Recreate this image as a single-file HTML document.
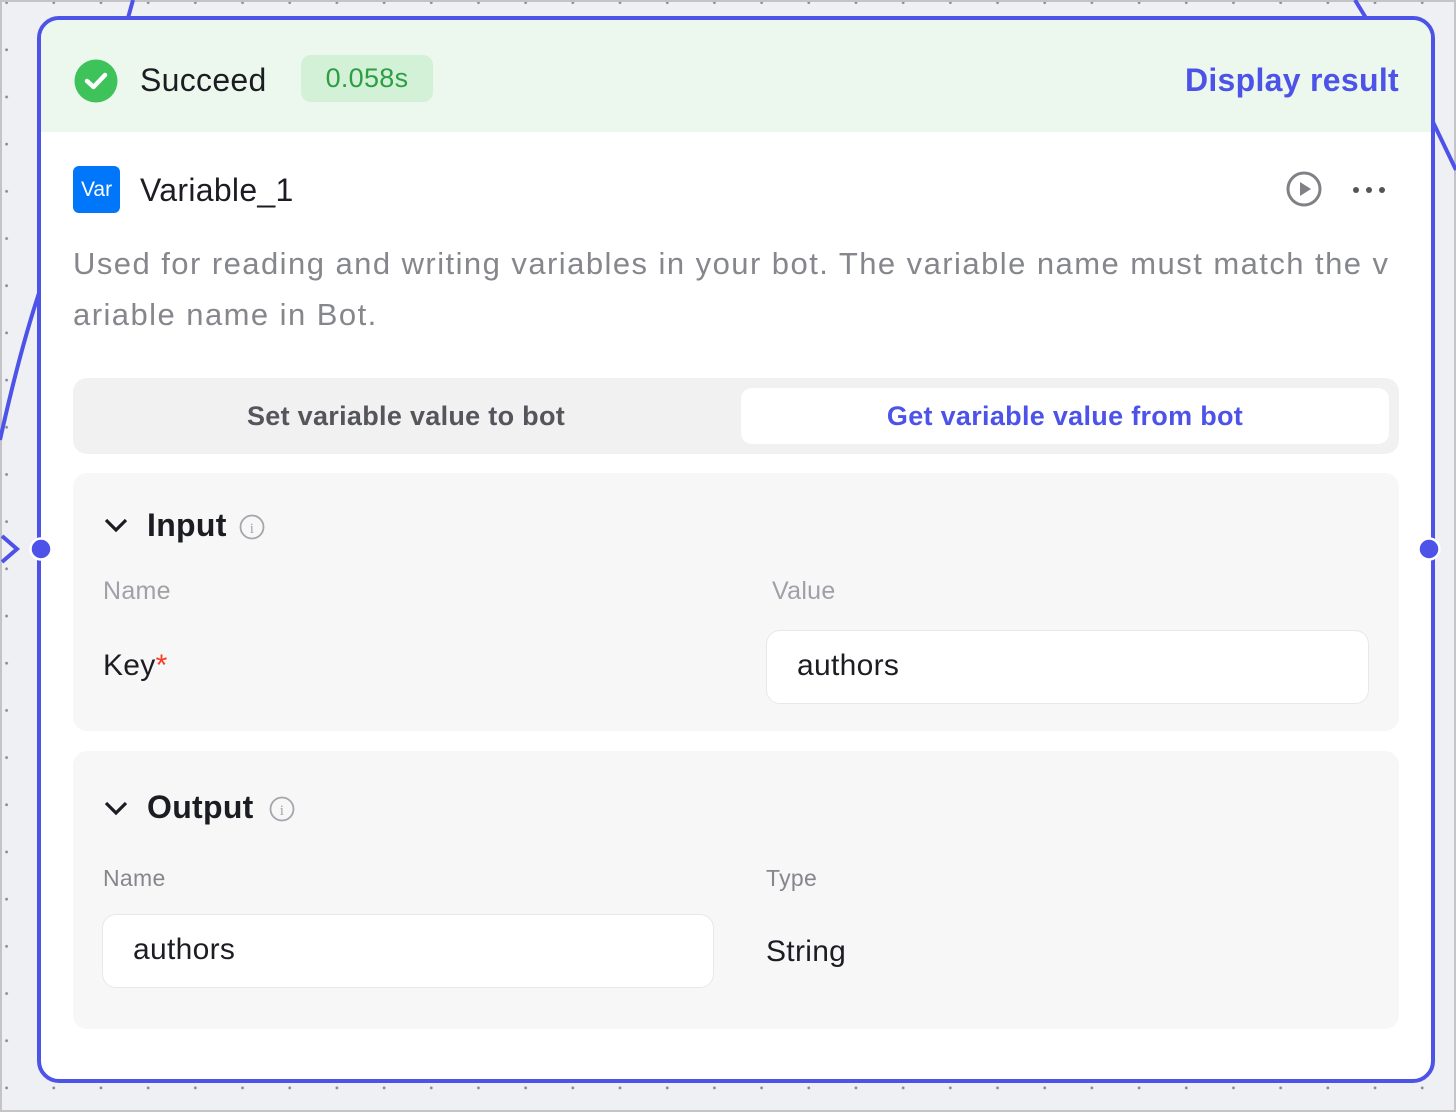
<!DOCTYPE html>
<html><head><style>
*{box-sizing:border-box;margin:0;padding:0}
body{width:1456px;height:1112px;overflow:hidden;font-family:"Liberation Sans",sans-serif;background-color:#eff0f3;background-image:radial-gradient(circle,#8a8a8f 1.3px,transparent 1.6px);background-size:47.2px 47.2px;background-position:-17px -21px;position:relative;border:2px solid #c4c4c8;letter-spacing:0.3px}
.card{position:absolute;left:35px;top:14px;width:1398px;height:1067px;border:4px solid #4d53e8;border-radius:22px;background:#fff;overflow:hidden}
.hdr{height:112px;background:#ecf7ee;position:relative}
.abs{position:absolute}
.sec{position:absolute;left:32px;width:1326px;background:#f7f7f8;border-radius:14px}
.lbl{position:absolute;font-size:25px;color:#a0a1a6}
.inp{position:absolute;background:#fff;border:1.5px solid #e8e8ec;border-radius:14px;height:74px;font-size:30px;color:#1c1d23;padding:18px 30px}
</style></head><body>
<svg class="abs" style="left:-2px;top:-2px" width="1456" height="1112">
<path d="M133 0 L128 18" stroke="#4d53e8" stroke-width="4"/>
<path d="M1355 0 L1366 18" stroke="#4d53e8" stroke-width="4"/>
<path d="M1432 120 L1456 170" stroke="#4d53e8" stroke-width="4"/>
<path d="M40 290 Q20 350 0 440" stroke="#4d53e8" stroke-width="4" fill="none"/>
<path d="M2 536 L17 549 L2 562" stroke="#4d53e8" stroke-width="4" fill="none"/>
</svg>
<div class="card">
<div class="hdr">
<svg class="abs" style="left:33px;top:39px" width="44" height="44"><circle cx="22" cy="22" r="21.5" fill="#3ec25a"/><path d="M13 22 L19.5 28 L31 16" stroke="#fff" stroke-width="4.5" fill="none" stroke-linecap="round" stroke-linejoin="round"/></svg>
<div class="abs" style="left:99px;top:42px;font-size:32px;color:#1c1d23">Succeed</div>
<div class="abs" style="left:260px;top:35px;width:132px;height:47px;background:#d2f1d6;border-radius:10px;color:#2e9e45;font-size:27px;text-align:center;line-height:47px">0.058s</div>
<div class="abs" style="right:32px;top:42px;font-size:32px;font-weight:bold;color:#4d53e8">Display result</div>
</div>
<div class="abs" style="left:32px;top:146px;width:47px;height:47px;background:#0077fa;border-radius:6px;color:#fff;font-size:21px;text-align:center;line-height:47px;letter-spacing:0">Var</div>
<div class="abs" style="left:99px;top:152px;font-size:32px;color:#1c1d23">Variable_1</div>
<svg class="abs" style="left:1245px;top:151px" width="36" height="36"><circle cx="18" cy="18" r="16" stroke="#808085" stroke-width="3" fill="none"/><path d="M14 11 L25 18 L14 25Z" fill="#808085"/></svg>
<svg class="abs" style="left:1310px;top:165px" width="40" height="10"><circle cx="5" cy="5" r="3" fill="#555"/><circle cx="18" cy="5" r="3" fill="#555"/><circle cx="31" cy="5" r="3" fill="#555"/></svg>
<div class="abs" style="left:32px;top:218px;width:1340px;font-size:31px;letter-spacing:1.45px;line-height:51px;color:#86878c;white-space:nowrap">Used for reading and writing variables in your bot. The variable name must match the v<br>ariable name in Bot.</div>
<div class="abs" style="left:32px;top:358px;width:1326px;height:76px;background:#f1f1f2;border-radius:14px">
<div class="abs" style="left:0;width:666px;top:0;height:76px;line-height:76px;text-align:center;font-size:27px;font-weight:bold;color:#55565c">Set variable value to bot</div>
<div class="abs" style="left:668px;top:10px;width:648px;height:56px;background:#fff;border-radius:11px;line-height:56px;text-align:center;font-size:27px;font-weight:bold;color:#4d53e8">Get variable value from bot</div>
</div>
<div class="sec" style="top:453px;height:258px">
<svg class="abs" style="left:30px;top:43px" width="26" height="18"><path d="M3 4 L13 14 L23 4" stroke="#1c1d23" stroke-width="3.2" fill="none"/></svg>
<div class="abs" style="left:74px;top:34px;font-size:32px;font-weight:bold;color:#1c1d23">Input</div>
<svg class="abs" style="left:166px;top:41px" width="26" height="26"><circle cx="13" cy="13" r="11.5" stroke="#a5a6ab" stroke-width="1.8" fill="none"/><text x="13" y="19" font-size="15" text-anchor="middle" fill="#a5a6ab" font-family="Liberation Serif">i</text></svg>
<div class="lbl" style="left:30px;top:104px">Name</div>
<div class="lbl" style="left:699px;top:104px">Value</div>
<div class="abs" style="left:30px;top:176px;font-size:30px;color:#1c1d23">Key<span style="color:#f93920">*</span></div>
<div class="inp" style="left:693px;top:157px;width:603px">authors</div>
</div>
<div class="sec" style="top:731px;height:278px">
<svg class="abs" style="left:30px;top:48px" width="26" height="18"><path d="M3 4 L13 14 L23 4" stroke="#1c1d23" stroke-width="3.2" fill="none"/></svg>
<div class="abs" style="left:74px;top:38px;font-size:32px;font-weight:bold;color:#1c1d23">Output</div>
<svg class="abs" style="left:196px;top:45px" width="26" height="26"><circle cx="13" cy="13" r="11.5" stroke="#a5a6ab" stroke-width="1.8" fill="none"/><text x="13" y="19" font-size="15" text-anchor="middle" fill="#a5a6ab" font-family="Liberation Serif">i</text></svg>
<div class="lbl" style="left:30px;top:114px;font-size:23px;color:#86878c">Name</div>
<div class="lbl" style="left:693px;top:114px;font-size:23px;color:#86878c">Type</div>
<div class="inp" style="left:29px;top:163px;width:612px">authors</div>
<div class="abs" style="left:693px;top:184px;font-size:30px;color:#1c1d23">String</div>
</div>
</div>
<svg class="abs" style="left:26px;top:534px" width="1420" height="28"><circle cx="13" cy="13" r="10.5" fill="#4d53e8" stroke="#fff" stroke-width="2.5"/><circle cx="1401" cy="13" r="10.5" fill="#4d53e8" stroke="#fff" stroke-width="2.5"/></svg>
</body></html>
